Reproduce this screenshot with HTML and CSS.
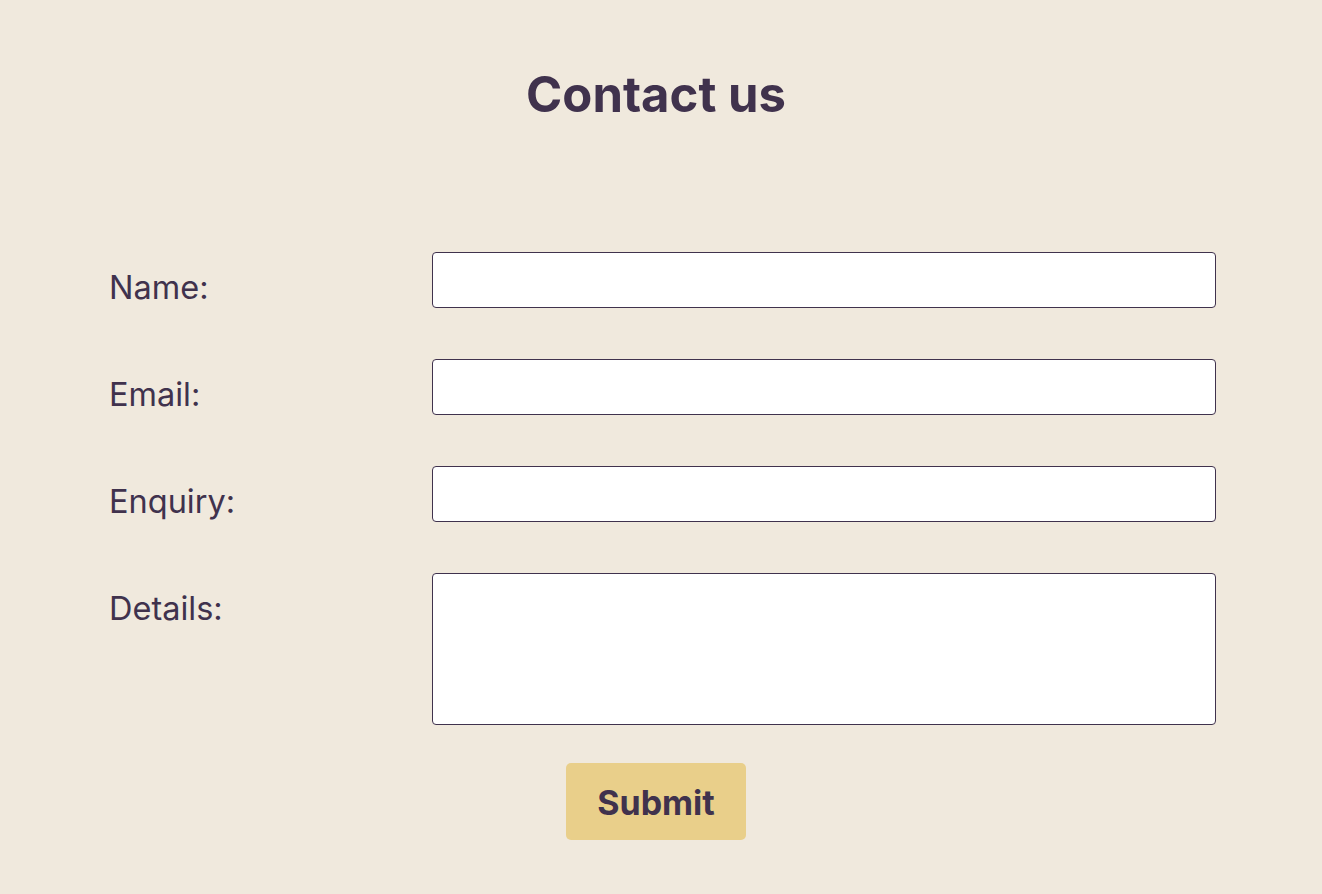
FILE: index.html
```html
<!DOCTYPE html>
<html lang="en">
<head>
<meta charset="utf-8">
<title>Contact us</title>
<link rel="stylesheet" href="styles.css">
</head>
<body>
<main class="page">
  <h1 class="title">Contact us</h1>
  <form class="form">
    <label class="label" for="name">Name:</label>
    <input class="field" id="name" type="text">
    <label class="label" for="email">Email:</label>
    <input class="field" id="email" type="email">
    <label class="label" for="enquiry">Enquiry:</label>
    <input class="field" id="enquiry" type="text">
    <label class="label" for="details">Details:</label>
    <textarea class="field area" id="details"></textarea>
    <div class="actions"><button class="submit" type="button">Submit</button></div>
  </form>
</main>
</body>
</html>
```
FILE: styles.css
```css
html, body {
  margin: 0;
  padding: 0;
  background: #f0e9dd;
}
body {
  font-family: Inter, "Noto Sans", sans-serif;
  color: #40324d;
}
.page {
  width: 1120px;
  margin-left: 96px;
  padding-top: 66px;
}
.title {
  margin: 0;
  text-align: center;
  font-size: 49px;
  font-weight: 700;
  line-height: 58px;
}
.form {
  margin-top: 128px;
  display: grid;
  grid-template-columns: 336px 784px;
  row-gap: 51px;
}
.label {
  font-size: 32.5px;
  line-height: 39px;
  padding: 16px 0 0 13px;
}
.field {
  box-sizing: border-box;
  width: 784px;
  height: 56px;
  margin: 0;
  border: 1px solid #40324d;
  border-radius: 4px;
  background: #fff;
  font-family: inherit;
  font-size: 20px;
  padding: 0 10px;
}
.area {
  height: 152px;
  resize: none;
}
.actions {
  grid-column: 1 / 3;
  display: flex;
  justify-content: center;
  margin-top: -13px;
}
.submit {
  width: 180px;
  height: 77px;
  padding: 2px 0 0;
  border: none;
  border-radius: 5px;
  background: #e9cf8a;
  color: #40324d;
  font-family: inherit;
  font-size: 34px;
  font-weight: 700;
}
```
